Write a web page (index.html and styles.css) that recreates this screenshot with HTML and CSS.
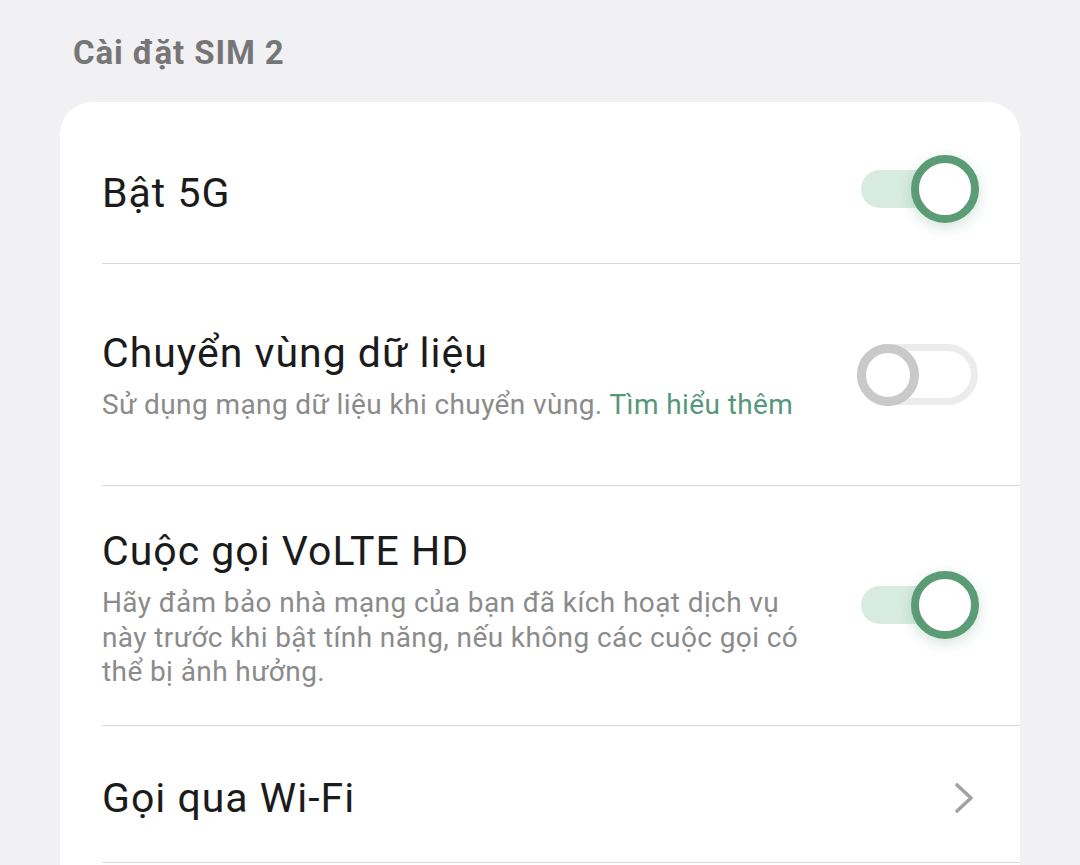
FILE: index.html
```
<!DOCTYPE html>
<html lang="vi">
<head>
<meta charset="utf-8">
<title>Cài đặt SIM 2</title>
<link rel="stylesheet" href="styles.css">
</head>
<body>
<div class="page">
  <h2 class="section-title">Cài đặt SIM 2</h2>
  <div class="card">
    <div class="row row-first">
      <div class="text">
        <div class="title">Bật 5G</div>
      </div>
      <div class="switch on"><span class="track"></span><span class="knob"></span></div>
    </div>
    <div class="row row-roam">
      <div class="text">
        <div class="title">Chuyển vùng dữ liệu</div>
        <div class="desc">Sử dụng mạng dữ liệu khi chuyển vùng. <span class="link">Tìm hiểu thêm</span></div>
      </div>
      <div class="switch off"><span class="track"></span><span class="knob"></span></div>
    </div>
    <div class="row row-volte">
      <div class="text">
        <div class="title">Cuộc gọi VoLTE HD</div>
        <div class="desc wrap">Hãy đảm bảo nhà mạng của bạn đã kích hoạt dịch vụ này trước khi bật tính năng, nếu không các cuộc gọi có thể bị ảnh hưởng.</div>
      </div>
      <div class="switch on"><span class="track"></span><span class="knob"></span></div>
    </div>
    <div class="row row-wifi">
      <div class="text">
        <div class="title">Gọi qua Wi-Fi</div>
      </div>
      <svg class="chevron" width="20" height="32" viewBox="0 0 20 32"><polyline points="3,3 17,16 3,29" fill="none" stroke="#a2a2a2" stroke-width="3.6" stroke-linecap="round" stroke-linejoin="round"/></svg>
    </div>
  </div>
</div>
</body>
</html>
```
FILE: styles.css
```
html, body {
  margin: 0;
  padding: 0;
  background: #f1f1f3;
  font-family: Roboto, "Noto Sans", sans-serif;
}
.page {
  width: 1080px;
  height: 865px;
  overflow: hidden;
  padding: 0 60px;
  box-sizing: border-box;
}
.section-title {
  margin: 0;
  padding: 33px 0 0 13px;
  height: 102px;
  box-sizing: border-box;
  font-size: 33px;
  line-height: 40px;
  letter-spacing: 0.9px;
  font-weight: 700;
  color: #767676;
}
.card {
  background: #ffffff;
  border-radius: 32px;
  padding-bottom: 40px;
}
.row {
  display: flex;
  align-items: center;
  justify-content: space-between;
  margin-left: 42px;
  padding-right: 41px;
  border-bottom: 1px solid #dadada;
  box-sizing: border-box;
}
.row-first { height: 162px; padding-top: 20px; }
.row-roam { height: 222px; padding-top: 3px; }
.row-volte { height: 240px; padding-top: 6px; }
.row-wifi { height: 137px; padding-top: 8px; }
.text { display: flex; flex-direction: column; }
.title {
  font-size: 41px;
  line-height: 48px;
  letter-spacing: 1px;
  color: #1b1b1b;
}
.desc {
  margin-top: 11px;
  font-size: 28px;
  line-height: 34.5px;
  letter-spacing: 0.4px;
  color: #8b8b8b;
}
.desc.wrap { width: 715px; }
.link { color: #55977a; }
.switch {
  position: relative;
  width: 122px;
  height: 68px;
  flex: none;
  margin-bottom: 4px;
}
.row-first .switch { margin-bottom: 8px; }
.row-volte .switch { margin-bottom: 7px; }
.switch .track, .switch .knob {
  position: absolute;
  box-sizing: border-box;
  border-radius: 50px;
}
.switch.on .track {
  left: 4px;
  top: 15px;
  width: 100px;
  height: 38px;
  background: #d8ebe0;
}
.switch.on .knob {
  right: 0;
  top: 0;
  width: 68px;
  height: 68px;
  background: #ffffff;
  border: 8px solid #5b9c77;
  box-shadow: 0 4px 14px rgba(91, 156, 119, 0.28);
}
.switch.off .track {
  left: 0;
  top: 4px;
  width: 121px;
  height: 61px;
  border: 7px solid #ececec;
  background: #ffffff;
}
.switch.off .knob {
  left: 0;
  top: 4px;
  width: 62px;
  height: 62px;
  border: 9px solid #c9c9c9;
  background: #ffffff;
}
.chevron {
  flex: none;
  margin-right: 5px;
}
```
